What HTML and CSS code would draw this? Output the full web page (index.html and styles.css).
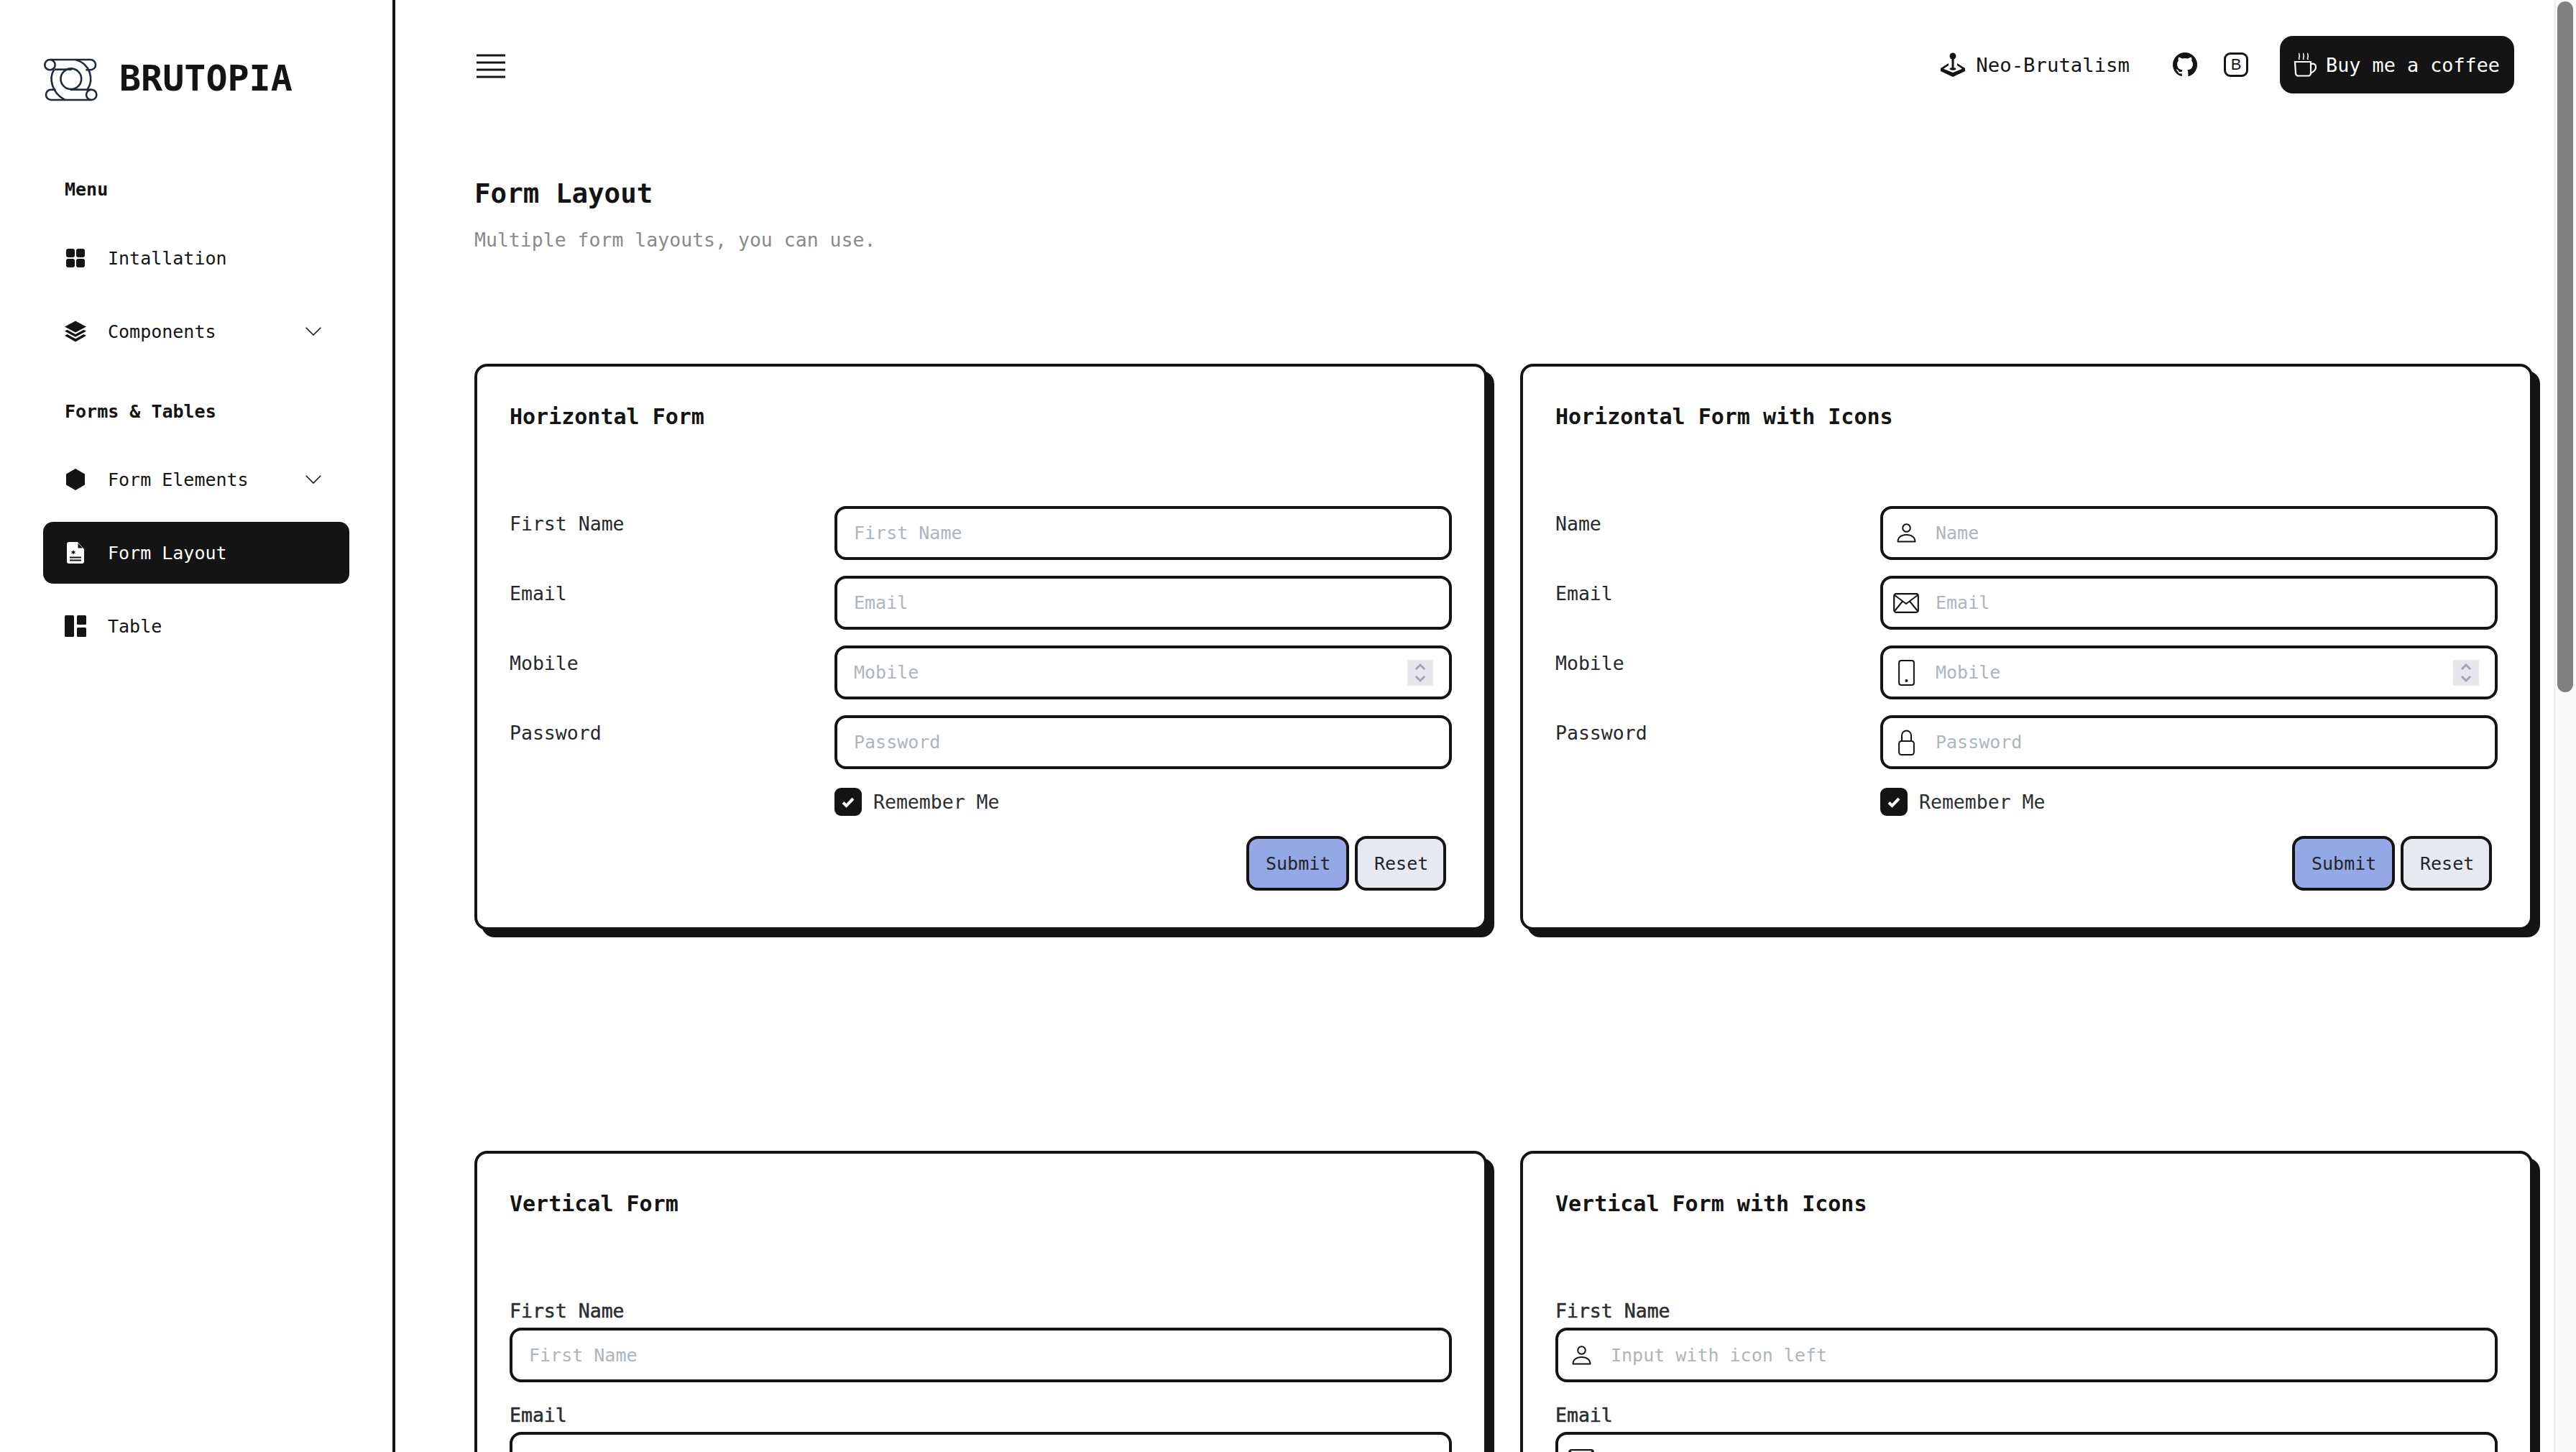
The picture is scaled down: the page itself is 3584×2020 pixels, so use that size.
FILE: index.html
```html
<!DOCTYPE html>
<html lang="en">
<head>
<meta charset="utf-8">
<title>Brutopia - Form Layout</title>
<link rel="stylesheet" href="styles.css">
</head>
<body>
<svg class="defs" width="0" height="0" aria-hidden="true">
  <defs>
    <symbol id="i-user" viewBox="0 0 27 27"><circle cx="13.5" cy="6.5" r="5.3" fill="none" stroke="currentColor" stroke-width="2"/><path d="M1.5 25.5c0-6 5-9.5 12-9.5s12 3.500 12 9.500z" fill="none" stroke="currentColor" stroke-width="2" stroke-linejoin="round"/></symbol>
    <symbol id="i-mail" viewBox="0 0 36 28"><rect x="1.200" y="1.200" width="33.600" height="25.600" rx="3" fill="none" stroke="currentColor" stroke-width="2.200"/><path d="M2 3l16 12L34 3M2 25l11-13.500M34 25L23 11.500" fill="none" stroke="currentColor" stroke-width="2"/></symbol>
    <symbol id="i-phone" viewBox="0 0 23 36"><rect x="1.100" y="1.100" width="20.800" height="33.800" rx="3" fill="none" stroke="currentColor" stroke-width="2"/><circle cx="11.500" cy="29" r="2" fill="currentColor"/></symbol>
    <symbol id="i-lock" viewBox="0 0 23 36"><rect x="1.100" y="16" width="20.800" height="19" rx="3.500" fill="none" stroke="currentColor" stroke-width="2"/><path d="M5 16V8a6.500 6.500 0 0 1 13 0v8" fill="none" stroke="currentColor" stroke-width="2"/></symbol>
    <symbol id="i-spin" viewBox="0 0 36 36"><rect width="36" height="36" fill="#e6e6ec"/><path d="M12 13l6-6 6 6M12 23l6 6 6-6" fill="none" stroke="#a3a3b4" stroke-width="3"/></symbol>
    <symbol id="i-chev" viewBox="0 0 22 12"><path d="M.700.700L11 11 21.300.700" fill="none" stroke="currentColor" stroke-width="1.600"/></symbol>
  </defs>
</svg>
<div class="app">
  <aside class="sidebar">
    <div class="brand">
      <svg class="brand-logo" viewBox="58 62 232 184" fill="none" stroke="#1f2b3a" stroke-width="8">
        <circle cx="85" cy="90" r="22"/>
        <circle cx="262" cy="218" r="22"/>
        <circle cx="175" cy="150" r="44"/>
        <path d="M85 68H258a22 22 0 0 1 0 44h-20"/>
        <path d="M105 110H178"/>
        <path d="M103 110C80 145 90 210 150 240"/>
        <path d="M195 68C255 85 275 150 245 196"/>
        <path d="M262 240H90a22 22 0 0 1 0-44h20"/>
        <path d="M172 196H262"/>
      </svg>
      <span class="brand-name">BRUTOPIA</span>
    </div>
    <div class="nav-title nav-title-first">Menu</div>
    <ul class="nav-list">
      <li class="nav-item">
        <svg class="nav-icon" viewBox="0 0 30 30"><rect x="2" y="2" width="12" height="12" rx="3"/><rect x="16" y="2" width="12" height="12" rx="3"/><rect x="2" y="16" width="12" height="12" rx="3"/><rect x="16" y="16" width="12" height="12" rx="3"/></svg>
        <span class="nav-text">Intallation</span>
      </li>
      <li class="nav-item">
        <svg class="nav-icon" viewBox="0 0 30 30"><path d="M15 .500L30 8.500 15 16.500 0 8.500z"/><path d="M3.500 12.800L0 14.800l15 8 15-8-3.500-2L15 19z"/><path d="M3.500 19L0 21l15 8.500L30 21l-3.500-2L15 25.300z"/></svg>
        <span class="nav-text">Components</span>
        <svg class="nav-chev"><use href="#i-chev"/></svg>
      </li>
    </ul>
    <div class="nav-title">Forms &amp; Tables</div>
    <ul class="nav-list">
      <li class="nav-item">
        <svg class="nav-icon" viewBox="0 0 30 30"><path d="M15 0l13 7.500v15L15 30 2 22.500v-15z"/></svg>
        <span class="nav-text">Form Elements</span>
        <svg class="nav-chev"><use href="#i-chev"/></svg>
      </li>
      <li class="nav-item nav-item-active">
        <svg class="nav-icon" viewBox="0 0 30 30"><path d="M6 0h12l9 10v17a3 3 0 0 1-3 3H6a3 3 0 0 1-3-3V3a3 3 0 0 1 3-3z" fill="#fff"/><path d="M18.500 1.500v7h6.500zM12 11l1 2.200 2.300-.6-1.600 1.800 1.600 1.800-2.300-.6-1 2.200-1-2.200-2.300.6 1.600-1.800-1.600-1.800 2.300.6zM7 20.500h16v2H7zM7 24.500h16v2H7z" fill="#141414"/></svg>
        <span class="nav-text">Form Layout</span>
      </li>
      <li class="nav-item">
        <svg class="nav-icon" viewBox="0 0 30 30"><rect y="0" width="13" height="30" rx="1.500"/><rect x="17" y="0" width="13" height="13" rx="1.500"/><rect x="17" y="17" width="13" height="13" rx="1.500"/></svg>
        <span class="nav-text">Table</span>
      </li>
    </ul>
  </aside>

  <main class="main">
    <header class="topbar">
      <svg class="burger" viewBox="0 0 40 34" stroke="#141414" stroke-width="3"><path d="M0 2h40M0 12h40M0 22h40M0 32h40"/></svg>
      <div class="top-links">
        <span class="top-link">
          <svg class="top-icon" viewBox="0 0 34 34"><circle cx="17" cy="5" r="4.500" fill="#141414"/><path d="M15.500 8h3v13h-3z" fill="#141414"/><path d="M11 15L0 22v4l17 8 17-8v-4l-11-7v3l7 4.700L17 28 4 22.700l7-4.700z" fill="#141414"/><path d="M17 21c3 0 4.500 1 4.500 1.800S20 24.800 17 24.800s-4.500-1.200-4.500-2S14 21 17 21z" fill="#141414"/></svg>
          <span>Neo-Brutalism</span>
        </span>
        <span class="top-social">
          <svg class="top-icon" viewBox="0 0 34 34"><path fill="#141414" d="M17 0C7.600 0 0 7.600 0 17c0 7.500 4.900 13.900 11.600 16.100.9.200 1.200-.4 1.200-.8v-3c-4.700 1-5.700-2.300-5.700-2.300-.8-2-1.900-2.500-1.900-2.500-1.500-1 .1-1 .1-1 1.700.1 2.600 1.700 2.600 1.700 1.500 2.600 4 1.900 4.900 1.400.2-1.100.6-1.800 1.100-2.200-3.800-.4-7.800-1.900-7.800-8.400 0-1.900.7-3.400 1.800-4.600-.2-.4-.8-2.200.2-4.500 0 0 1.400-.5 4.700 1.700 1.400-.4 2.800-.6 4.200-.6s2.800.2 4.200.6c3.200-2.200 4.700-1.700 4.700-1.700.9 2.300.3 4.100.2 4.500 1.100 1.200 1.800 2.700 1.800 4.600 0 6.500-4 8-7.800 8.400.6.500 1.200 1.600 1.200 3.200v4.700c0 .5.300 1 1.200.8C29.100 30.900 34 24.500 34 17 34 7.600 26.400 0 17 0z"/></svg>
          <span class="b-badge">B</span>
        </span>
        <button class="coffee-btn" type="button">
          <svg class="coffee-icon" viewBox="0 0 32 34" fill="none" stroke="#fff" stroke-width="2.200"><path d="M2 13h22v16a3.500 3.500 0 0 1-3.500 3.500H7A3.500 3.500 0 0 1 3 29z"/><path d="M24 16c5-1.500 7 1 7 4.500S28 27 24 28.500"/><path d="M8 1c-1.500 2 1.500 3 0 5.500S8 8 8 10M14 1c-1.500 2 1.500 3 0 5.500S14 8 14 10M20 1c-1.500 2 1.500 3 0 5.500S20 8 20 10" stroke-width="1.600"/></svg>
          <span>Buy me a coffee</span>
        </button>
      </div>
    </header>

    <section class="page-head">
      <h1 class="page-title">Form Layout</h1>
      <p class="page-sub">Multiple form layouts, you can use.</p>
    </section>

    <div class="card-grid card-grid-first">
      <article class="card">
        <h2 class="card-title">Horizontal Form</h2>
        <form class="h-form">
          <label class="h-label">First Name</label>
          <div class="field"><span class="ph">First Name</span></div>
          <label class="h-label">Email</label>
          <div class="field"><span class="ph">Email</span></div>
          <label class="h-label">Mobile</label>
          <div class="field"><span class="ph">Mobile</span><svg class="spin"><use href="#i-spin"/></svg></div>
          <label class="h-label">Password</label>
          <div class="field"><span class="ph">Password</span></div>
          <div class="check-row">
            <span class="check"><svg viewBox="0 0 20 20" class="check-mark"><path d="M3 10.500l4.500 4.500 9.500-10" fill="none" stroke="#fff" stroke-width="4"/></svg></span>
            <span>Remember Me</span>
          </div>
          <div class="btn-row">
            <button class="btn btn-primary" type="button">Submit</button>
            <button class="btn btn-plain" type="button">Reset</button>
          </div>
        </form>
      </article>

      <article class="card">
        <h2 class="card-title">Horizontal Form with Icons</h2>
        <form class="h-form">
          <label class="h-label">Name</label>
          <div class="field field-icon"><span class="fi"><svg class="fi-user"><use href="#i-user"/></svg></span><span class="ph">Name</span></div>
          <label class="h-label">Email</label>
          <div class="field field-icon"><span class="fi"><svg class="fi-mail"><use href="#i-mail"/></svg></span><span class="ph">Email</span></div>
          <label class="h-label">Mobile</label>
          <div class="field field-icon"><span class="fi"><svg class="fi-tall"><use href="#i-phone"/></svg></span><span class="ph">Mobile</span><svg class="spin"><use href="#i-spin"/></svg></div>
          <label class="h-label">Password</label>
          <div class="field field-icon"><span class="fi"><svg class="fi-tall"><use href="#i-lock"/></svg></span><span class="ph">Password</span></div>
          <div class="check-row">
            <span class="check"><svg viewBox="0 0 20 20" class="check-mark"><path d="M3 10.500l4.500 4.500 9.500-10" fill="none" stroke="#fff" stroke-width="4"/></svg></span>
            <span>Remember Me</span>
          </div>
          <div class="btn-row">
            <button class="btn btn-primary" type="button">Submit</button>
            <button class="btn btn-plain" type="button">Reset</button>
          </div>
        </form>
      </article>
    </div>

    <div class="card-grid card-grid-second">
      <article class="card">
        <h2 class="card-title">Vertical Form</h2>
        <form class="v-form">
          <div class="v-group"><label class="v-label">First Name</label><div class="field"><span class="ph">First Name</span></div></div>
          <div class="v-group"><label class="v-label">Email</label><div class="field"><span class="ph">Email</span></div></div>
        </form>
      </article>
      <article class="card">
        <h2 class="card-title">Vertical Form with Icons</h2>
        <form class="v-form">
          <div class="v-group"><label class="v-label">First Name</label><div class="field field-icon"><span class="fi"><svg class="fi-user"><use href="#i-user"/></svg></span><span class="ph">Input with icon left</span></div></div>
          <div class="v-group"><label class="v-label">Email</label><div class="field field-icon"><span class="fi"><svg class="fi-mail"><use href="#i-mail"/></svg></span><span class="ph">Email</span></div></div>
        </form>
      </article>
    </div>
  </main>

  <div class="scrollbar"><div class="scroll-thumb"></div></div>
</div>
</body>
</html>
```
FILE: styles.css
```css
* { box-sizing: border-box; }
html, body { margin: 0; height: 100%; overflow: hidden; background: #fff; }
body { font-family: "DejaVu Sans Mono", "Liberation Mono", monospace; color: #141414; }
.defs { display: block; height: 0; }
.app { display: flex; height: 2020px; overflow: hidden; }

.sidebar { flex: 0 0 550px; height: 100%; border-right: 4px solid #141414; padding: 81px 60px 0; }
.brand { display: flex; align-items: center; gap: 29px; height: 60px; }
.brand-logo { width: 77px; height: 60px; flex: none; }
.brand-name { font-size: 50px; font-weight: 700; line-height: 60px; margin-top: -4px; }
.nav-title { font-size: 25px; font-weight: 700; line-height: 30px; padding-left: 30px; margin: 54px 0 36px; }
.nav-title-first { margin-top: 108px; margin-bottom: 37px; }
.nav-list { list-style: none; margin: 0; padding: 0; display: flex; flex-direction: column; gap: 16px; }
.nav-item { display: flex; align-items: center; height: 86px; padding: 0 39px 0 30px; border-radius: 14px; font-size: 25px; }
.nav-icon { width: 30px; height: 30px; flex: none; fill: currentColor; }
.nav-text { margin-left: 30px; flex: 1; }
.nav-chev { width: 22px; height: 12px; flex: none; }
.nav-item-active { background: #141414; color: #fff; }

.main { flex: 1; min-width: 0; height: 100%; overflow: hidden; padding: 0 29px 0 110px; }
.topbar { display: flex; align-items: center; justify-content: space-between; height: 130px; padding: 50px 26px 0 3px; }
.burger { width: 40px; height: 34px; margin-top: 4px; flex: none; }
.top-links { display: flex; align-items: center; }
.top-link { display: flex; align-items: center; gap: 15px; font-size: 27.3px; }
.top-icon { width: 34px; height: 34px; flex: none; }
.top-social { display: flex; align-items: center; gap: 37px; margin-left: 60px; }
.b-badge { display: flex; align-items: center; justify-content: center; width: 34px; height: 34px; border: 3px solid #141414; border-radius: 9px; font-family: "Liberation Sans", sans-serif; font-size: 22px; }
.coffee-btn { display: flex; align-items: center; gap: 13px; height: 80px; margin-left: 44px; padding: 0 20px 0 19px; border: 0; border-radius: 18px; background: #141414; color: #fff; font: inherit; font-size: 26.8px; }
.coffee-icon { width: 32px; height: 34px; flex: none; }

.page-head { padding-top: 117px; }
.page-title { margin: 0; font-size: 37.5px; font-weight: 700; line-height: 44px; }
.page-sub { margin: 27px 0 0; font-size: 26.5px; line-height: 32px; color: #8a8a8a; }

.card-grid { display: grid; grid-template-columns: 1fr 1fr; gap: 46px; align-items: start; }
.card-grid-first { margin-top: 156px; }
.card-grid-second { margin-top: 307px; }
.card { position: relative; min-height: 788px; padding: 47px 45px 0; border: 4px solid #141414; border-radius: 18px; background: #fff; box-shadow: 10px 10px 0 #141414; }
.card-title { margin: 0; height: 46px; font-size: 30px; font-weight: 700; line-height: 46px; }

.h-form { display: grid; grid-template-columns: 452px 1fr; row-gap: 22px; margin-top: 101px; }
.h-label { font-size: 26.5px; line-height: 32px; color: #26292c; padding-top: 9px; }
.field { display: flex; align-items: center; height: 75px; padding: 0 22px 0 23px; border: 4px solid #141414; border-radius: 16px; background: #fff; }
.ph { flex: 1; font-size: 25px; color: #adb5bd; }
.spin { width: 36px; height: 36px; flex: none; }
.field-icon { padding-left: 0; }
.fi { flex: none; width: 64px; margin-right: 9px; display: flex; justify-content: center; }
.fi-user { width: 27px; height: 27px; }
.fi-mail { width: 36px; height: 28px; }
.fi-tall { width: 23px; height: 36px; }

.check-row { grid-column: 2; display: flex; align-items: center; gap: 16px; height: 39px; margin-top: 4px; font-size: 26.5px; color: #2b2e31; }
.check { display: flex; align-items: center; justify-content: center; width: 38px; height: 39px; border-radius: 9px; background: #141414; flex: none; }
.check-mark { width: 20px; height: 20px; }
.btn-row { grid-column: 2; display: flex; justify-content: flex-end; gap: 8px; margin-top: 6px; padding-right: 8px; }
.btn { height: 76px; padding: 0 23px; border: 4px solid #141414; border-radius: 16px; font: inherit; font-size: 25px; color: #212529; }
.btn-primary { width: 143px; background: #94a8e6; }
.btn-plain { width: 127px; background: #e6e9ef; }

.card-grid-second .card { min-height: 900px; }
.v-form { margin-top: 110px; display: flex; flex-direction: column; gap: 30px; }
.v-group { display: flex; flex-direction: column; }
.v-label { font-size: 26.5px; line-height: 32px; margin-bottom: 7px; color: #2b2e31; -webkit-text-stroke: 0.5px #2b2e31; }
.v-form .field { height: 76px; }

.scrollbar { flex: 0 0 31px; height: 100%; background: #fafafa; border-left: 3px solid #f0f0f0; padding: 2px 4px 0 2px; }
.scroll-thumb { height: 961px; border-radius: 11px; background: #808080; }
```
